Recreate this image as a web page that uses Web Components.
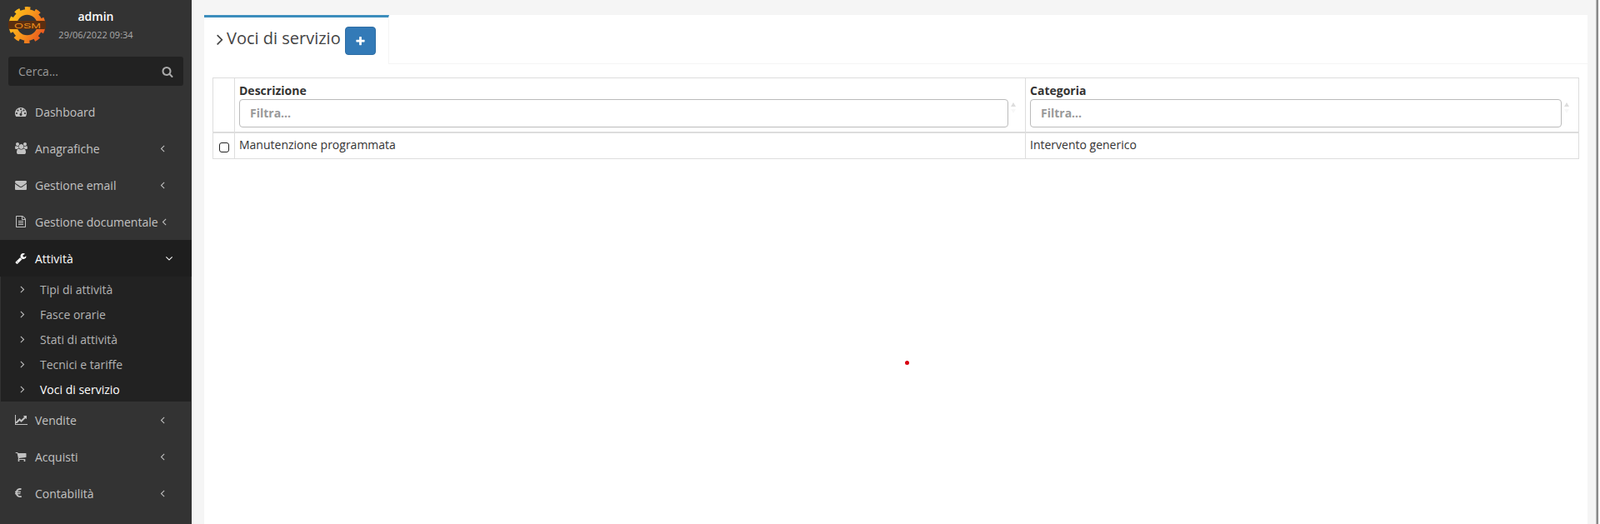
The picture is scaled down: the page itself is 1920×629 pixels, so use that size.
<!DOCTYPE html>
<html lang="it">
<head>
<meta charset="utf-8">
<title>Voci di servizio</title>
<style>
    html, body {
        margin: 0;
        height: 629px;
        overflow: hidden;
        font-family: 'Open Sans', sans-serif;
        font-size: 14px;
        color: #333;
    }
</style>
</head>
<body>
<osm-app>
    <osm-sidebar slot="sidebar">
        <osm-user name="admin" date="29/06/2022 09:34"></osm-user>
        <osm-search placeholder="Cerca..."></osm-search>
        <osm-menu-item icon="dashboard" label="Dashboard"></osm-menu-item>
        <osm-menu-item icon="users" label="Anagrafiche" arrow="left"></osm-menu-item>
        <osm-menu-item icon="envelope" label="Gestione email" arrow="left"></osm-menu-item>
        <osm-menu-item icon="file" label="Gestione documentale" arrow="left"></osm-menu-item>
        <osm-menu-item icon="wrench" label="Attività" arrow="down" open></osm-menu-item>
        <osm-submenu>
            <osm-submenu-item label="Tipi di attività"></osm-submenu-item>
            <osm-submenu-item label="Fasce orarie"></osm-submenu-item>
            <osm-submenu-item label="Stati di attività"></osm-submenu-item>
            <osm-submenu-item label="Tecnici e tariffe"></osm-submenu-item>
            <osm-submenu-item label="Voci di servizio" active></osm-submenu-item>
        </osm-submenu>
        <osm-menu-item icon="chart" label="Vendite" arrow="left"></osm-menu-item>
        <osm-menu-item icon="cart" label="Acquisti" arrow="left"></osm-menu-item>
        <osm-menu-item icon="euro" label="Contabilità" arrow="left"></osm-menu-item>
    </osm-sidebar>
    <osm-card>
        <osm-tab-header slot="header" title="Voci di servizio"></osm-tab-header>
        <osm-table></osm-table>
    </osm-card>
</osm-app>

<script>
const ICONS = {
    dashboard: ['0 0 1792 1792', 'M384 1152q0-53-37.5-90.5t-90.5-37.5-90.5 37.5-37.5 90.5 37.5 90.5 90.5 37.5 90.5-37.5 37.5-90.5zm192-448q0-53-37.5-90.5t-90.5-37.5-90.5 37.5-37.5 90.5 37.5 90.5 90.5 37.5 90.5-37.5 37.5-90.5zm428 481l101-382q6-26-7.5-48.5t-38.5-29.5-48 6.5-30 39.5l-101 382q-60 5-107 43.5t-63 98.5q-20 77 20 146t117 89 146-20 89-117q16-60-6-117t-72-91zm660-33q0-53-37.5-90.5t-90.5-37.5-90.5 37.5-37.5 90.5 37.5 90.5 90.5 37.5 90.5-37.5 37.5-90.5zm-640-640q0-53-37.5-90.5t-90.5-37.5-90.5 37.5-37.5 90.5 37.5 90.5 90.5 37.5 90.5-37.5 37.5-90.5zm448 192q0-53-37.5-90.5t-90.5-37.5-90.5 37.5-37.5 90.5 37.5 90.5 90.5 37.5 90.5-37.5 37.5-90.5zm320 448q0 261-141 483-19 29-54 29h-1402q-35 0-54-29-141-221-141-483 0-182 71-348t191-286 286-191 348-71 348 71 286 191 191 286 71 348z'],
    users: ['0 0 1920 1792', 'M593 896q-162 5-265 128h-134q-82 0-138-40.5t-56-118.5q0-353 124-353 6 0 43.5 21t97.5 42.5 119 21.5q67 0 133-23-5 37-5 66 0 139 81 256zm1071 637q0 120-73 189.5t-194 69.5h-874q-121 0-194-69.5t-73-189.5q0-53 3.5-103.5t14-109 26.5-108.5 43-97.5 62-81 85.5-53.5 111.5-20q10 0 43 21.5t73 48 107 48 135 21.5 135-21.5 107-48 73-48 43-21.5q61 0 111.5 20t85.5 53.5 62 81 43 97.5 26.5 108.5 14 109 3.5 103.5zm-1024-1277q0 106-75 181t-181 75-181-75-75-181 75-181 181-75 181 75 75 181zm704 384q0 159-112.5 271.5t-271.5 112.5-271.5-112.5-112.5-271.5 112.5-271.5 271.5-112.5 271.5 112.5 112.5 271.5zm576 225q0 78-56 118.5t-138 40.5h-134q-103-123-265-128 81-117 81-256 0-29-5-66 66 23 133 23 59 0 119-21.5t97.5-42.5 43.5-21q124 0 124 353zm-128-609q0 106-75 181t-181 75-181-75-75-181 75-181 181-75 181 75 75 181z'],
    envelope: ['0 0 1792 1792', 'M1792 710v794q0 66-47 113t-113 47h-1472q-66 0-113-47t-47-113v-794q44 49 101 87 362 246 497 345 57 42 92.5 65.5t94.5 48 110 24.5h2q51 0 110-24.5t94.5-48 92.5-65.5q170-123 498-345 57-39 100-87zm0-294q0 79-49 151t-122 123q-376 261-468 325-10 7-42.5 30.5t-54 38-52 32.5-57.5 27-50 9h-2q-23 0-50-9t-57.5-27-52-32.5-54-38-42.5-30.5q-91-64-262-182.5t-205-142.5q-62-42-117-115.5t-55-136.5q0-78 41.5-130t118.5-52h1472q65 0 112.5 47t47.5 113z'],
    file: ['0 0 1792 1792', 'M1596 380q28 28 48 76t20 88v1152q0 40-28 68t-68 28h-1344q-40 0-68-28t-28-68v-1600q0-40 28-68t68-28h896q40 0 88 20t76 48zm-444-244v376h376q-10-29-22-41l-313-313q-12-12-41-22zm384 1528v-1024h-416q-40 0-68-28t-28-68v-416h-768v1536h1280zm-1024-864q0-14 9-23t23-9h704q14 0 23 9t9 23v64q0 14-9 23t-23 9h-704q-14 0-23-9t-9-23v-64zm736 224q14 0 23 9t9 23v64q0 14-9 23t-23 9h-704q-14 0-23-9t-9-23v-64q0-14 9-23t23-9h704zm0 256q14 0 23 9t9 23v64q0 14-9 23t-23 9h-704q-14 0-23-9t-9-23v-64q0-14 9-23t23-9h704z'],
    wrench: ['0 0 1792 1792', 'M448 1472q0-26-19-45t-45-19-45 19-19 45 19 45 45 19 45-19 19-45zm644-420l-682 682q-37 37-90 37-52 0-91-37l-106-108q-38-36-38-90 0-53 38-91l681-681q39 98 114.5 173.5t173.5 114.5zm634-435q0 39-23 106-47 134-164.5 217.5t-258.5 83.5q-185 0-316.5-131.5t-131.5-316.5 131.5-316.5 316.5-131.5q58 0 121.5 16.5t107.5 46.5q16 11 16 28t-16 28l-293 169v224l193 107q5-3 79-48.5t135.5-81 70.5-35.5q15 0 23.5 10t8.5 25z'],
    chart: ['0 0 2048 1792', 'M1920 1536v128h-1920v-1536h128v1408h1792zm-128-1248v435q0 21-19.5 29.5t-35.5-7.5l-121-121-633 633q-10 10-23 10t-23-10l-233-233-416 416-192-192 585-585q10-10 23-10t23 10l233 233 464-464-121-121q-16-16-7.5-35.5t29.5-19.5h435q14 0 23 9t9 23z'],
    cart: ['0 0 1792 1792', 'M704 1536q0 52-38 90t-90 38-90-38-38-90 38-90 90-38 90 38 38 90zm896 0q0 52-38 90t-90 38-90-38-38-90 38-90 90-38 90 38 38 90zm128-1088v512q0 24-16.5 42.5t-40.5 21.5l-1044 122q13 60 13 70 0 16-24 64h920q26 0 45 19t19 45-19 45-45 19h-1024q-26 0-45-19t-19-45q0-11 8-31.5t16-36 21.5-40 15.5-29.5l-177-823h-204q-26 0-45-19t-19-45 19-45 45-19h256q16 0 28.5 6.5t19.5 15.5 13 24.5 8 26 5.5 29.5 4.5 26h1201q26 0 45 19t19 45z'],
    euro: ['0 0 1024 1792', 'M976 1321l35 159q3 12-3 22.5t-17 14.5l-5 1q-4 2-10.5 3.5t-16 4.5-21.5 5.5-25.5 5-30 5-33.5 4.5-36.5 3-38.5 1q-234 0-409-130.5t-238-351.5h-95q-13 0-22.5-9.5t-9.5-22.5v-113q0-13 9.5-22.5t22.5-9.5h66q-2-57 1-105h-67q-14 0-23-9t-9-23v-114q0-14 9-23t23-9h98q67-210 243.5-338t400.5-128q102 0 194 23 11 3 20 15 6 11 3 24l-43 159q-3 13-14 19.5t-24 2.5l-4-1q-4-1-11.5-2.5l-17.5-3.5-22.5-3.5-26-3-29-2.5-29.5-1q-126 0-226 64t-150 176h468q16 0 25 12 10 12 7 26l-24 114q-5 26-32 26h-488q-3 47 0 105h459q15 0 25 12 9 12 6 27l-24 112q-2 11-11 18.5t-20 7.5h-387q48 117 149.5 185.5t228.5 68.5q18 0 36-1.5t33.5-3.5 29.5-4.5 24.5-5 18.5-4.5l12-3 5-2q13-5 26 2 12 7 15 21z'],
    search: ['0 0 1792 1792', 'M1216 832q0-185-131.5-316.5t-316.5-131.5-316.5 131.5-131.5 316.5 131.5 316.5 316.5 131.5 316.5-131.5 131.5-316.5zm512 832q0 52-38 90t-90 38q-54 0-90-38l-343-342q-179 124-399 124-143 0-273.5-55.5t-225-150-150-225-55.5-273.5 55.5-273.5 150-225 225-150 273.5-55.5 273.5 55.5 225 150 150 225 55.5 273.5q0 220-124 399l343 343q37 37 37 90z'],
    plus: ['0 0 1792 1792', 'M1600 736v192q0 40-28 68t-68 28h-416v416q0 40-28 68t-68 28h-192q-40 0-68-28t-28-68v-416h-416q-40 0-68-28t-28-68v-192q0-40 28-68t68-28h416v-416q0-40 28-68t68-28h192q40 0 68 28t28 68v416h416q40 0 68 28t28 68z'],
    left: ['0 0 1792 1792', 'M1203 544q0 13-10 23l-393 393 393 393q10 10 10 23t-10 23l-50 50q-10 10-23 10t-23-10l-466-466q-10-10-10-23t10-23l466-466q10-10 23-10t23 10l50 50q10 10 10 23z'],
    right: ['0 0 1792 1792', 'M1171 960q0 13-10 23l-466 466q-10 10-23 10t-23-10l-50-50q-10-10-10-23t10-23l393-393-393-393q-10-10-10-23t10-23l50-50q10-10 23-10t23 10l466 466q10 10 10 23z'],
    down: ['0 0 1792 1792', 'M1395 736q0 13-10 23l-466 466q-10 10-23 10t-23-10l-466-466q-10-10-10-23t10-23l50-50q10-10 23-10t23 10l393 393 393-393q10-10 23-10t23 10l50 50q10 10 10 23z']
};

function icon(name, size) {
    const [box, d] = ICONS[name];
    const width = size * parseInt(box.split(' ')[2]) / 1792;
    return `<svg width="${width}" height="${size}" viewBox="${box}" fill="currentColor" aria-hidden="true"><path d="${d}"/></svg>`;
}

class OsmApp extends HTMLElement {
    constructor() {
        super();
        this.shadow = this.attachShadow({ mode: 'open' });
    }

    connectedCallback() {
        this.shadow.innerHTML = `
            <style>
                :host {
                    display: flex;
                    position: relative;
                    height: 629px;
                    overflow: hidden;
                    background: #f5f5f5;
                }
                main {
                    flex: 1;
                    min-width: 0;
                    display: flex;
                    padding: 18px 15px 0;
                    box-sizing: border-box;
                }
                /* the page's thin scrollbar, drawn over the content */
                .bar {
                    position: absolute;
                    top: 0;
                    bottom: 0;
                    right: 0;
                    width: 5px;
                    box-sizing: border-box;
                    border-left: 1px solid #b8b8b8;
                    background: linear-gradient(to right, #8a8a8a 2px, #fafafa 2px);
                }
            </style>
            <slot name="sidebar"></slot>
            <main><slot></slot></main>
            <div class="bar"></div>
        `;
    }
}

class OsmSidebar extends HTMLElement {
    constructor() {
        super();
        this.shadow = this.attachShadow({ mode: 'open' });
    }

    connectedCallback() {
        this.shadow.innerHTML = `
            <style>
                :host {
                    display: block;
                    flex: none;
                    width: 230px;
                    height: 629px;
                    overflow: hidden;
                    background: #333;
                }
            </style>
            <slot></slot>
        `;
    }
}

class OsmUser extends HTMLElement {
    constructor() {
        super();
        this.shadow = this.attachShadow({ mode: 'open' });
    }

    connectedCallback() {
        this.shadow.innerHTML = `
            <style>
                :host {
                    display: flex;
                    height: 58px;
                    padding: 8px 0 0 10px;
                    box-sizing: content-box;
                }
                svg { flex: none; }
                .info {
                    margin-left: 14px;
                    width: 90px;
                    text-align: center;
                }
                .name {
                    color: #fff;
                    font-size: 14px;
                    font-weight: 600;
                    line-height: 20px;
                    margin-top: 2px;
                }
                .date {
                    color: #aaa;
                    font-size: 11px;
                    line-height: 16px;
                    margin-top: 4px;
                    white-space: nowrap;
                }
            </style>
            <svg width="46" height="46" viewBox="0 0 46 46">
                <defs>
                    <linearGradient id="gear" gradientUnits="userSpaceOnUse" x1="2" y1="8" x2="44" y2="30">
                        <stop offset="0" stop-color="#fcc419"/>
                        <stop offset="0.5" stop-color="#f7981c"/>
                        <stop offset="1" stop-color="#e9561f"/>
                    </linearGradient>
                </defs>
                <circle cx="22.5" cy="22" r="15.5" fill="none" stroke="url(#gear)" stroke-width="6.5"/>
                <circle cx="22.5" cy="22" r="19.5" fill="none" stroke="url(#gear)" stroke-width="5" stroke-dasharray="6.4 5.85" stroke-dashoffset="9.3"/>
                <rect x="0" y="17" width="45" height="10" rx="2" fill="#5a2e10"/>
                <text x="23" y="25.5" text-anchor="middle" font-family="'Liberation Sans', sans-serif" font-size="9.5" fill="#ee8f1c" textLength="32" lengthAdjust="spacingAndGlyphs">OSM</text>
            </svg>
            <div class="info">
                <div class="name">${this.getAttribute('name')}</div>
                <div class="date">${this.getAttribute('date')}</div>
            </div>
        `;
    }
}

class OsmSearch extends HTMLElement {
    constructor() {
        super();
        this.shadow = this.attachShadow({ mode: 'open' });
    }

    connectedCallback() {
        this.shadow.innerHTML = `
            <style>
                :host {
                    display: flex;
                    align-items: center;
                    justify-content: space-between;
                    height: 35px;
                    margin: 2px 10px 9px;
                    padding: 0 12px;
                    box-sizing: border-box;
                    background: #222;
                    border-radius: 3px;
                    color: #999;
                }
                span { font-size: 14px; }
                svg { display: block; color: #aaa; }
            </style>
            <span>${this.getAttribute('placeholder')}</span>
            ${icon('search', 14)}
        `;
    }
}

class OsmMenuItem extends HTMLElement {
    constructor() {
        super();
        this.shadow = this.attachShadow({ mode: 'open' });
    }

    connectedCallback() {
        const arrow = this.getAttribute('arrow');
        this.shadow.innerHTML = `
            <style>
                :host {
                    display: flex;
                    align-items: center;
                    height: 44px;
                    padding-left: 18px;
                    box-sizing: border-box;
                    color: #c2c2c2;
                    font-size: 14px;
                }
                :host([open]) {
                    background: #1e1e1e;
                    color: #fff;
                }
                .icon {
                    flex: none;
                    width: 24px;
                    display: flex;
                    align-items: center;
                }
                .icon svg { display: block; }
                .label {
                    white-space: nowrap;
                    flex: 1;
                }
                .arrow {
                    flex: none;
                    display: flex;
                    width: 14px;
                    margin-right: 28px;
                    justify-content: center;
                }
                :host([arrow="down"]) .arrow { margin-right: 20px; }
            </style>
            <span class="icon">${icon(this.getAttribute('icon'), 14)}</span>
            <span class="label">${this.getAttribute('label')}</span>
            <span class="arrow">${arrow ? icon(arrow, 14) : ''}</span>
        `;
    }
}

class OsmSubmenu extends HTMLElement {
    constructor() {
        super();
        this.shadow = this.attachShadow({ mode: 'open' });
    }

    connectedCallback() {
        this.shadow.innerHTML = `
            <style>
                :host {
                    display: block;
                    margin: 0 1px;
                    background: #222;
                }
            </style>
            <slot></slot>
        `;
    }
}

class OsmSubmenuItem extends HTMLElement {
    constructor() {
        super();
        this.shadow = this.attachShadow({ mode: 'open' });
    }

    connectedCallback() {
        this.shadow.innerHTML = `
            <style>
                :host {
                    display: flex;
                    align-items: center;
                    height: 30px;
                    padding-left: 19px;
                    box-sizing: border-box;
                    color: #b4b4b4;
                    font-size: 14px;
                }
                :host([active]) { color: #fff; }
                .icon { width: 28px; display: flex; color: #c2c2c2; }
                .icon svg { display: block; }
            </style>
            <span class="icon">${icon('right', 14)}</span>
            <span>${this.getAttribute('label')}</span>
        `;
    }
}

class OsmCard extends HTMLElement {
    constructor() {
        super();
        this.shadow = this.attachShadow({ mode: 'open' });
    }

    connectedCallback() {
        this.shadow.innerHTML = `
            <style>
                :host {
                    display: block;
                    flex: 1;
                    min-width: 0;
                    position: relative;
                    background: #fff;
                }
                .body { padding: 16px 10px 0; }
                .dot {
                    position: absolute;
                    left: 841px;
                    top: 415px;
                    width: 5px;
                    height: 5px;
                    border-radius: 50%;
                    background: #d80010;
                }
            </style>
            <slot name="header"></slot>
            <div class="body"><slot></slot></div>
            <div class="dot"></div>
        `;
    }
}

class OsmTabHeader extends HTMLElement {
    constructor() {
        super();
        this.shadow = this.attachShadow({ mode: 'open' });
    }

    connectedCallback() {
        this.shadow.innerHTML = `
            <style>
                :host {
                    display: block;
                    height: 59px;
                    box-sizing: border-box;
                    border-bottom: 1px solid #f4f4f4;
                    background: #fff;
                }
                .tab {
                    display: flex;
                    align-items: flex-start;
                    width: 222px;
                    height: 59px;
                    box-sizing: border-box;
                    border-top: 3px solid #3c8dbc;
                    border-right: 1px solid #f4f4f4;
                    padding: 11px 0 0 8px;
                    background: #fff;
                    color: #444;
                }
                .chev { display: flex; margin-top: 4px; }
                .chev svg { display: block; }
                h3 {
                    margin: 0 5px 0 -3px;
                    font-size: 20px;
                    font-weight: 400;
                    line-height: 28px;
                    white-space: nowrap;
                    color: #444;
                }
                button {
                    flex: none;
                    width: 37px;
                    height: 34px;
                    padding: 0;
                    display: flex;
                    align-items: center;
                    justify-content: center;
                    background: #337ab7;
                    border: 1px solid #2e6da4;
                    border-radius: 4px;
                    color: #fff;
                }
                button svg { display: block; }
            </style>
            <div class="tab">
                <span class="chev">${icon('right', 22)}</span>
                <h3>${this.getAttribute('title')}</h3>
                <button type="button">${icon('plus', 13)}</button>
            </div>
        `;
    }
}

class OsmTable extends HTMLElement {
    constructor() {
        super();
        this.shadow = this.attachShadow({ mode: 'open' });
    }

    connectedCallback() {
        const head = (label, cls) => `
            <th class="${cls}">
                <div class="title">${label}</div>
                <div class="filter">
                    <input type="text" placeholder="Filtra...">
                    <span class="sort"><i class="up"></i><i class="down"></i></span>
                </div>
            </th>`;
        this.shadow.innerHTML = `
            <style>
                :host {
                    display: block;
                    font-size: 14px;
                    color: #333;
                }
                table {
                    width: 100%;
                    table-layout: fixed;
                    border-collapse: collapse;
                }
                th, td {
                    border: 1px solid #ddd;
                    padding: 5px;
                    text-align: left;
                    box-sizing: border-box;
                }
                th {
                    height: 65px;
                    border-bottom-width: 2px;
                    vertical-align: top;
                }
                td { height: 31px; padding: 3px 5px 6px; }
                .check { width: 26px; padding: 0; text-align: center; vertical-align: middle; }
                .desc { width: 949px; }
                .title { font-weight: 700; line-height: 20px; }
                .filter { display: flex; align-items: center; }
                input {
                    flex: 1;
                    min-width: 0;
                    height: 34px;
                    box-sizing: border-box;
                    padding: 5px 12px 7px;
                    border: 1px solid #bbb;
                    border-radius: 4px;
                    font: 700 14px 'Open Sans', sans-serif;
                    color: #555;
                    background: #fff;
                }
                input::placeholder { color: #999; opacity: 1; }
                .sort {
                    flex: none;
                    width: 12px;
                    margin-right: 3px;
                    display: flex;
                    flex-direction: column;
                    align-items: center;
                    gap: 3px;
                    margin-top: -14px;
                }
                .sort i {
                    width: 0;
                    height: 0;
                    border-left: 3px solid transparent;
                    border-right: 3px solid transparent;
                }
                .up { border-bottom: 5px solid #ddd; }
                .down { border-top: 5px solid #f7f7f7; }
                .box {
                    display: block;
                    width: 10px;
                    height: 10px;
                    margin: 5px auto 0;
                    border: 1.5px solid #222;
                    border-radius: 3px;
                    background: #fff;
                }
            </style>
            <table>
                <thead>
                    <tr>
                        <th class="check"></th>
                        ${head('Descrizione', 'desc')}
                        ${head('Categoria', '')}
                    </tr>
                </thead>
                <tbody>
                    <tr>
                        <td class="check"><span class="box"></span></td>
                        <td>Manutenzione programmata</td>
                        <td>Intervento generico</td>
                    </tr>
                </tbody>
            </table>
        `;
    }
}

customElements.define('osm-app', OsmApp);
customElements.define('osm-sidebar', OsmSidebar);
customElements.define('osm-user', OsmUser);
customElements.define('osm-search', OsmSearch);
customElements.define('osm-menu-item', OsmMenuItem);
customElements.define('osm-submenu', OsmSubmenu);
customElements.define('osm-submenu-item', OsmSubmenuItem);
customElements.define('osm-card', OsmCard);
customElements.define('osm-tab-header', OsmTabHeader);
customElements.define('osm-table', OsmTable);
</script>
</body>
</html>
